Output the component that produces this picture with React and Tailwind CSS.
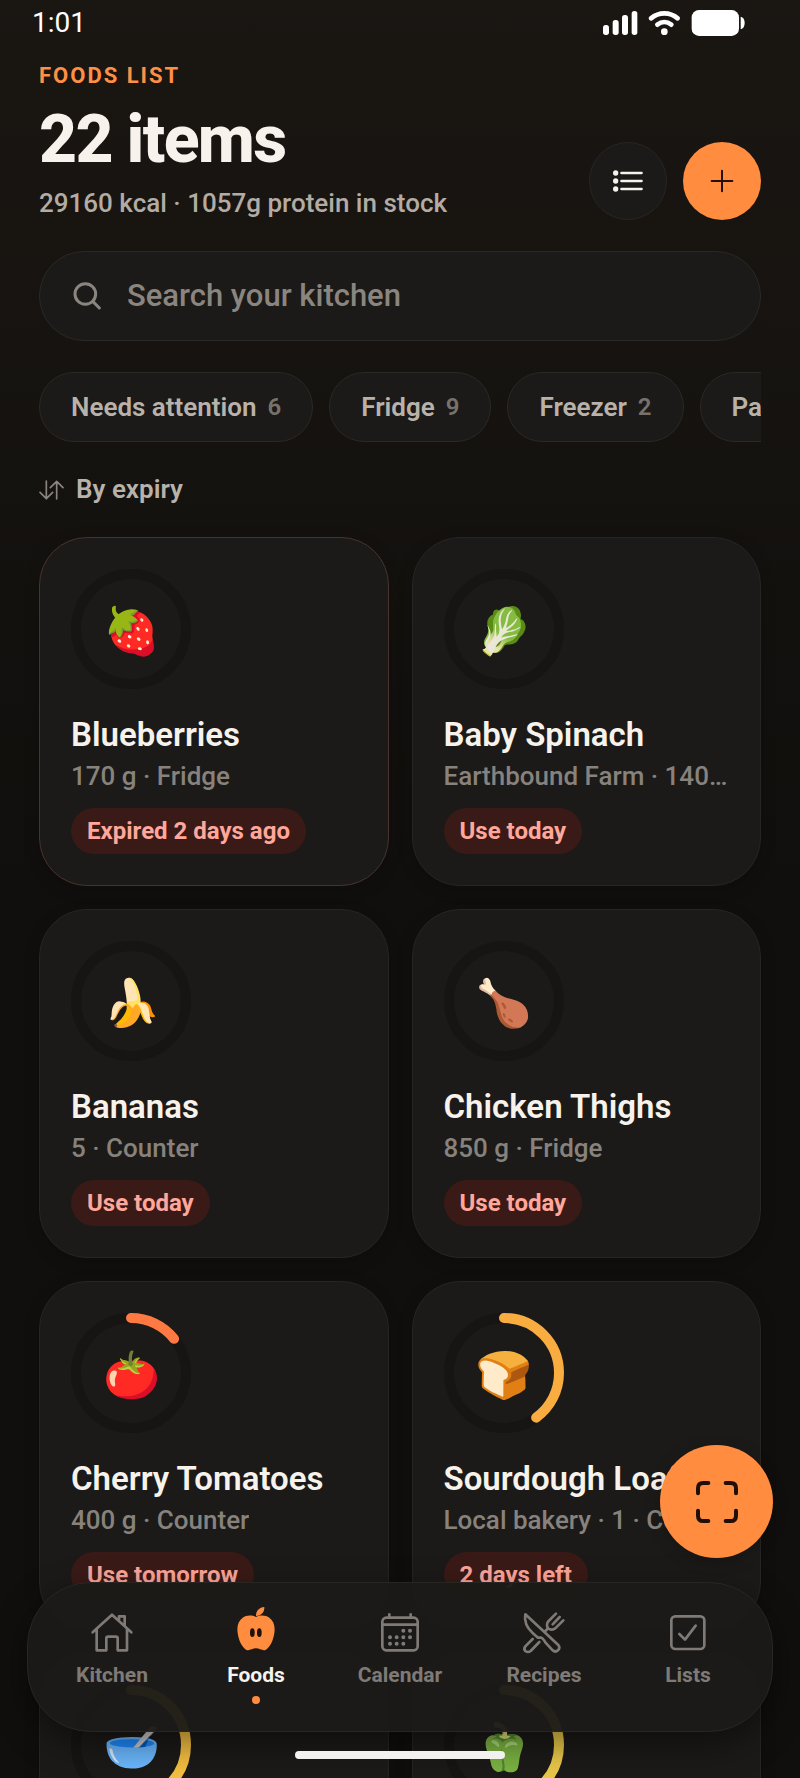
const foods = [
  { icon: "🍓", name: "Blueberries", meta: "170 g · Fridge", status: "Expired 2 days ago", left: 0, expired: true },
  { icon: "🥬", name: "Baby Spinach", meta: "Earthbound Farm · 140 g · Fridge", status: "Use today", left: 0 },
  { icon: "🍌", name: "Bananas", meta: "5 · Counter", status: "Use today", left: 0 },
  { icon: "🍗", name: "Chicken Thighs", meta: "850 g · Fridge", status: "Use today", left: 0 },
  { icon: "🍅", name: "Cherry Tomatoes", meta: "400 g · Counter", status: "Use tomorrow", left: 0.143, color: "#ff7a42" },
  { icon: "🍞", name: "Sourdough Loaf", meta: "Local bakery · 1 · Counter", status: "2 days left", left: 0.4, color: "#f9ad40" },
  { icon: "🥣", left: 0.6, color: "#f5c042" },
  { icon: "🫑", left: 0.6, color: "#e9c84a" },
];

const filters = [
  { label: "Needs attention", count: 6 },
  { label: "Fridge", count: 9 },
  { label: "Freezer", count: 2 },
  { label: "Pantry" },
];

function StatusBar() {
  return (
    <div className="flex h-[46px] items-center justify-between pr-[55px] pl-8 text-[28px] leading-8 text-white">
      <span>1:01</span>
      <svg className="h-[26px] w-[142px]" viewBox="0 0 426 78" fill="white" aria-hidden="true">
        <rect x="0" y="45" width="18" height="30" rx="8" />
        <rect x="29" y="30" width="18" height="45" rx="8" />
        <rect x="57" y="15" width="18" height="60" rx="8" />
        <rect x="86" y="3" width="17" height="72" rx="8" />
        <path d="M144 25c24-20 56-20 80 0M163 44c13-10 29-10 42 0" fill="none" stroke="white" strokeWidth="14" strokeLinecap="round" />
        <circle cx="184" cy="65" r="10" />
        <rect x="266" y="0" width="142" height="78" rx="22" />
        <path d="M413 20q12 3 12 19t-12 19z" />
      </svg>
    </div>
  );
}

function ListIcon() {
  return (
    <svg className="h-6 w-[30px]" viewBox="0 0 90 72" aria-hidden="true">
      <g fill="#f7f2ec">
        <circle cx="8" cy="12" r="8" />
        <circle cx="8" cy="36" r="8" />
        <circle cx="8" cy="60" r="8" />
      </g>
      <path d="M25 12h61M25 36h61M25 60h61" stroke="#f7f2ec" strokeWidth="7" strokeLinecap="round" />
    </svg>
  );
}

function PlusIcon() {
  return (
    <svg className="size-6" viewBox="0 0 72 72" aria-hidden="true">
      <path d="M36 5v62M5 36h62" stroke="#241006" strokeWidth="6" strokeLinecap="round" />
    </svg>
  );
}

function SearchIcon() {
  return (
    <svg className="size-7 shrink-0" viewBox="0 0 84 84" fill="none" stroke="#8b8580" strokeWidth="9" strokeLinecap="round" aria-hidden="true">
      <circle cx="37" cy="36" r="31" />
      <path d="M60 59l19 19" />
    </svg>
  );
}

function SortIcon() {
  return (
    <svg className="h-5 w-[25px]" viewBox="0 0 75 60" fill="none" stroke="#8b8580" strokeWidth="5" strokeLinecap="round" strokeLinejoin="round" aria-hidden="true">
      <path d="M22 3v53M3 37l19 19 19-19M53 57V4M34 23L53 4l19 19" />
    </svg>
  );
}

function ScanIcon() {
  return (
    <svg className="size-[42px]" viewBox="0 0 126 126" fill="none" stroke="#1f0f06" strokeWidth="12" strokeLinecap="round" aria-hidden="true">
      <path d="M6 37V22Q6 6 22 6h15M89 6h15q16 0 16 16v15M120 89v15q0 16-16 16H89M37 120H22q-16 0-16-16V89" />
    </svg>
  );
}

function NavIcon({ children }) {
  return (
    <svg className="size-12" viewBox="0 0 144 144" fill="none" stroke="currentColor" strokeWidth="8" strokeLinecap="round" strokeLinejoin="round" aria-hidden="true">
      {children}
    </svg>
  );
}

const tabs = [
  {
    label: "Kitchen",
    icon: (
      <NavIcon>
        <path d="M14 76L72 23l58 53M26 66v64h29V94q0-5 5-5h24q5 0 5 5v36h28V66M93 42V28h17v28" />
      </NavIcon>
    ),
  },
  {
    label: "Foods",
    active: true,
    icon: (
      <NavIcon>
        <path
          d="M72 30C84 24 101 24 112 32C125 41 130 58 127 78C124 100 114 121 102 128C92 133 84 124 72 124C60 124 52 133 42 128C30 121 20 100 17 78C14 58 19 41 32 32C43 24 60 24 72 30Z"
          fill="#ff8c3f"
          stroke="none"
        />
        <path d="M72 27C71 12 82 1 97 0C98 15 88 26 72 27Z" fill="#ff8c3f" stroke="none" />
        <ellipse cx="61" cy="77" rx="7" ry="13" fill="#1f120a" stroke="none" />
        <ellipse cx="82" cy="77" rx="7" ry="13" fill="#1f120a" stroke="none" />
      </NavIcon>
    ),
  },
  {
    label: "Calendar",
    icon: (
      <NavIcon>
        <rect x="19" y="32" width="106" height="98" rx="12" />
        <path d="M19 53h106M40 22v9M104 22v9" />
        <path d="M82 71h0M102 71h0M42 91h0M62 91h0M82 91h0M102 91h0M42 110h0M62 110h0M82 110h0" strokeWidth="12" />
      </NavIcon>
    ),
  },
  {
    label: "Recipes",
    icon: (
      <NavIcon>
        <path d="M16 22C12 44 20 62 38 78L54 92H64C70 94 72 100 76 106L98 130Q106 137 114 130Q122 122 114 113Z" />
        <path d="M38 96L16 118Q10 126 16 132Q24 138 32 132L58 105" />
        <path d="M108 20L86 42Q77 52 84 64M130 40L108 62Q96 72 84 64L76 72M119 30L98 52" />
      </NavIcon>
    ),
  },
  {
    label: "Lists",
    icon: (
      <NavIcon>
        <rect x="22" y="28" width="99" height="98" rx="12" />
        <path d="M46 81l17 17 32-42" />
      </NavIcon>
    ),
  },
];

function Ring({ value, color, icon }) {
  const length = 2 * Math.PI * 55;
  return (
    <div className="relative grid size-[120px] place-items-center">
      <svg className="absolute inset-0 -rotate-90" viewBox="0 0 120 120" fill="none" strokeWidth="10" aria-hidden="true">
        <circle cx="60" cy="60" r="55" stroke="#161513" />
        {value > 0 && (
          <circle cx="60" cy="60" r="55" stroke={color} strokeLinecap="round" strokeDasharray={`${length * value} ${length}`} />
        )}
      </svg>
      <span className="relative pt-[3px] text-[46px] leading-[52px]">{icon}</span>
    </div>
  );
}

function FoodCard({ food }) {
  return (
    <article
      className={`flex min-h-[349px] min-w-0 flex-col items-start rounded-[48px] border bg-[#1b1a18] p-[31px] shadow-[0_4px_16px_rgba(0,0,0,0.18)] ${
        food.expired ? "border-[#48332f]" : "border-[#272523]"
      }`}
    >
      <Ring value={food.left} color={food.color} icon={food.icon} />
      {food.name && (
        <>
          <h2 className="mt-[26px] max-w-full truncate text-[33px] leading-10 font-semibold text-[#f7f2ec]">{food.name}</h2>
          <p className="mt-[5px] max-w-full truncate text-[26px] leading-8 font-medium text-[#88827d]">{food.meta}</p>
          <span className="mt-4 rounded-full bg-[#3a1a16] px-4 text-[24px] leading-[46px] font-bold text-[#ffa79b]">{food.status}</span>
        </>
      )}
    </article>
  );
}

export default function App() {
  return (
    <div className="relative h-screen overflow-hidden bg-[#100f0d] bg-linear-to-b from-[#1a1612] from-0% via-[#100f0d] via-50% to-[#100f0d] font-[Roboto,sans-serif] select-none">
      <StatusBar />
      <main className="flex flex-col gap-[31px] px-[39px] pt-[18px]">
        <header className="flex items-end justify-between">
          <div>
            <p className="text-[22px] leading-6 font-bold tracking-[2px] text-[#ff8f45] uppercase">Foods list</p>
            <h1 className="mt-4 text-[66px] leading-[72px] font-extrabold tracking-tight text-[#f7f2ec]">22 items</h1>
            <p className="mt-[11px] text-[26px] leading-[33px] font-medium text-[#b3aca4]">29160 kcal · 1057g protein in stock</p>
          </div>
          <div className="flex gap-4">
            <button type="button" aria-label="List view" className="grid size-[78px] place-items-center rounded-full border border-[#282623] bg-[#1b1a18]">
              <ListIcon />
            </button>
            <button type="button" aria-label="Add food" className="grid size-[78px] place-items-center rounded-full bg-[#ff8c3f]">
              <PlusIcon />
            </button>
          </div>
        </header>

        <label className="flex h-[90px] items-center gap-[26px] rounded-full border border-[#2b2926] bg-[#1b1a18] px-[33px]">
          <SearchIcon />
          <input
            type="search"
            aria-label="Search your kitchen"
            placeholder="Search your kitchen"
            className="min-w-0 flex-1 bg-transparent text-[31px] leading-10 font-medium text-[#f7f2ec] outline-none placeholder:text-[#8b8580]"
          />
        </label>

        <div className="flex gap-4 overflow-x-auto [scrollbar-width:none]">
          {filters.map((f) => (
            <button
              key={f.label}
              type="button"
              className="flex h-[70px] shrink-0 items-center gap-[11px] rounded-full border border-[#2b2926] bg-[#1b1a18] px-[31px] text-[26px] font-semibold text-[#b9b2aa]"
            >
              {f.label}
              {f.count && <span className="text-[24px] text-[#78726c]">{f.count}</span>}
            </button>
          ))}
        </div>

        <button type="button" className="flex items-center gap-3 self-start text-[26px] leading-[33px] font-semibold text-[#b9b2aa]">
          <SortIcon />
          By expiry
        </button>

        <section className="grid grid-cols-2 gap-[23px]">
          {foods.map((food) => (
            <FoodCard key={food.icon} food={food} />
          ))}
        </section>
      </main>

      <button
        type="button"
        aria-label="Scan item"
        className="absolute right-[27px] bottom-[220px] grid size-[113px] place-items-center rounded-full bg-[#ff8c3f] shadow-[0_4px_16px_rgba(0,0,0,0.18)]"
      >
        <ScanIcon />
      </button>

      <nav className="absolute inset-x-[27px] bottom-[46px] flex h-[150px] rounded-[64px] border border-[#282623] bg-[#1b1a18]/96 px-3 pt-6 shadow-[0_12px_36px_rgba(0,0,0,0.45)]">
        {tabs.map((tab) => (
          <a
            key={tab.label}
            href={`#${tab.label.toLowerCase()}`}
            aria-current={tab.active ? "page" : undefined}
            className={`flex flex-1 flex-col items-center ${tab.active ? "text-[#f7f2ec]" : "text-[#7f7a76]"}`}
          >
            {tab.icon}
            <span className="mt-2 text-[21px] leading-6 font-bold">{tab.label}</span>
            {tab.active && <span className="mt-[9px] size-2 rounded-full bg-[#ff8c3f]" />}
          </a>
        ))}
      </nav>

      <div className="absolute bottom-[19px] left-1/2 h-2 w-[210px] -translate-x-1/2 rounded-full bg-[#f3f1ef]" />
    </div>
  );
}
